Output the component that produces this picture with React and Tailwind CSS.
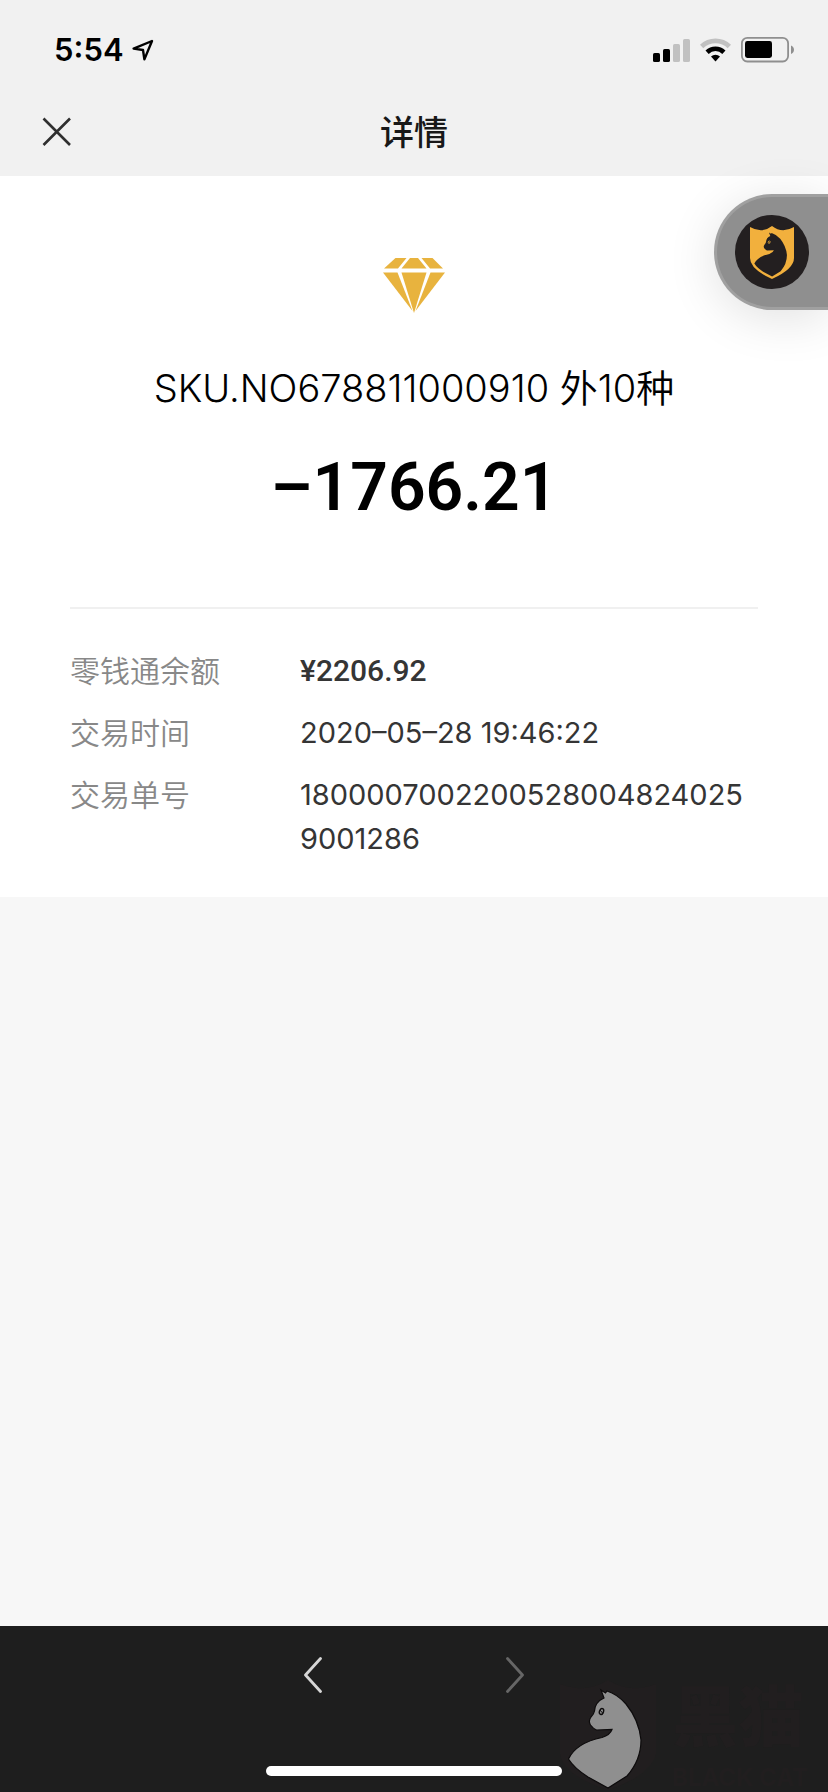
import React from "react";

const details = [
  { label: "零钱通余额", value: "¥2206.92", money: true },
  { label: "交易时间", value: "2020–05–28 19:46:22" },
  { label: "交易单号", value: "18000070022005280048240259001286" },
];

const StatusBar = () => (
  <div className="flex h-[88px] items-center justify-between pl-[54px] pr-[34px] pt-[11px]">
    <div className="flex items-center gap-2">
      <span className="text-[31px] leading-10 font-semibold text-black">5:54</span>
      <svg width="22" height="22" viewBox="0 0 22 22" fill="none" stroke="#000" strokeWidth="2.4" strokeLinejoin="round">
        <path d="M20 2 1.6 9.6 11 11 12.4 20.4Z" />
      </svg>
    </div>
    <div className="flex items-center gap-[10px]">
      <svg width="37" height="24" viewBox="0 0 37 24">
        <rect x="0" y="15" width="7" height="9" rx="1.6" />
        <rect x="10" y="11" width="7" height="13" rx="1.6" />
        <rect x="20" y="6" width="7" height="18" rx="1.6" fill="#c1c1c1" />
        <rect x="30" y="1" width="7" height="23" rx="1.6" fill="#c1c1c1" />
      </svg>
      <svg width="31" height="24" viewBox="0 0 31 24">
        <path d="M0 6.8A22 22 0 0 1 31 6.8L27.7 10.2A17.4 17.4 0 0 0 3.3 10.2Z" fill="#c1c1c1" />
        <path d="M5.5 12.6A14.2 14.2 0 0 1 25.5 12.6L22.3 15.9A9.7 9.7 0 0 0 8.7 15.9Z" />
        <path d="M11 18.6A6.5 6.5 0 0 1 20 18.6L15.5 23.4Z" />
      </svg>
      <svg width="53" height="26" viewBox="0 0 53 26">
        <rect x="0.9" y="0.9" width="46.2" height="23.6" rx="5.4" fill="none" stroke="#8f8f8f" strokeWidth="1.8" />
        <rect x="4" y="4" width="27" height="17" rx="2.4" />
        <path d="M50 8.5C54 10 54 15.5 50 17Z" fill="#8f8f8f" />
      </svg>
    </div>
  </div>
);

const Diamond = () => (
  <svg width="62" height="56" viewBox="0 0 62 56" fill="#e8b33e">
    <path d="M12.5 0H23.5L15 10.5H1Z" />
    <path d="M27 0H35L43.5 10.5H18.5Z" />
    <path d="M38.5 0H49.5L60 10.5H47Z" />
    <path d="M0 14.5H14.5L29.5 53Z" />
    <path d="M18.5 14.5H43.5L31 55Z" />
    <path d="M47.5 14.5H62L32.5 53Z" />
  </svg>
);

const catPath =
  "M41 10L44 18Q35 22 34.5 31Q34 34 31 37Q28 41 30.5 45Q33 48.5 36.5 50L52 49.5Q50 55 42 57.5Q16 63 8.5 79Q14 88 28 97L48 108L67 96Q81 80 81 60Q79 40 66 24Q57 14 47 11L45.5 13Z";

const Eye = ({ fill }) => (
  <>
    <ellipse cx="41.5" cy="31.5" rx="2" ry="3" transform="rotate(20 41.5 31.5)" fill="none" stroke={fill} strokeWidth="1.4" />
    <path d="M40 30L43 33.5" stroke={fill} strokeWidth="1" />
  </>
);

const FloatingBall = () => (
  <button
    aria-label="黑猫"
    className="absolute right-0 top-[194px] flex h-[116px] w-[114px] items-center rounded-l-full border-[3px] border-r-0 border-[#a0a0a0] bg-[#8f8f8f] pl-[18px] shadow-[0_8px_50px_rgba(0,0,0,0.12)]"
  >
    <svg width="74" height="74" viewBox="0 0 74 74">
      <circle cx="37" cy="37" r="37" fill="#231f20" />
      <path d="M15 12Q27 19 37 11Q47 19 59 12V43Q59 54 37 64Q15 54 15 43Z" fill="#f2b03d" />
      <g transform="translate(15.5 13) scale(0.45 0.45)">
        <path d={catPath} fill="#231f20" />
        <Eye fill="#f2b03d" />
      </g>
    </svg>
  </button>
);

const Watermark = () => (
  <div className="absolute bottom-0 right-0 flex items-end">
    <svg width="100" height="112" viewBox="0 0 100 112">
      <path d="M0 4Q26 14 48 0Q70 14 96 4V74Q90 96 48 110Q4 96 0 74Z" fill="#211e1f" />
      <path d={catPath} fill="#8f8f8f" stroke="#0d0b0c" strokeWidth="1.2" />
      <Eye fill="#0d0b0c" />
    </svg>
    <div className="w-[168px] pl-3 text-[#211e1f]">
      <div className="text-[66px] font-black leading-[94px]">黑猫</div>
      <div className="text-[24px] font-bold leading-7">BLACK CAT</div>
    </div>
  </div>
);

const App = () => {
  return (
    <div className="relative flex min-h-screen flex-col overflow-hidden bg-[#f7f7f7] font-['Inter','Noto_Sans_CJK_SC',sans-serif]">
      <header className="bg-[#f1f1f1]">
        <StatusBar />
        <div className="grid h-[88px] grid-cols-[1fr_auto_1fr] items-center px-[42px]">
          <button aria-label="关闭" className="w-[30px]">
            <svg width="30" height="30" viewBox="0 0 30 30" stroke="#2f2f2f" strokeWidth="2.6">
              <path d="M1.5 1.5 28 28M28 1.5 1.5 28" />
            </svg>
          </button>
          <h1 className="text-[34px] font-medium text-[#181818]">详情</h1>
        </div>
      </header>

      {/* 交易內容 */}
      <main className="flex flex-col items-center bg-white px-[70px] pb-9 pt-[82px]">
        <Diamond />
        <p className="mt-11 text-[38px] font-[350] leading-[60px] text-black">SKU.NO678811000910 外10种</p>
        <p className="mt-7 font-['Roboto',sans-serif] text-[66px] font-semibold leading-[84px] text-black">–1766.21</p>
        <dl className="mt-[77px] flex w-full flex-col gap-[18px] border-t-2 border-[#f0f0f0] pt-10 text-[30px] leading-[44px]">
          {details.map((item) => (
            <div key={item.label} className="flex">
              <dt className="w-[230px] shrink-0 font-[350] text-[#888888]">{item.label}</dt>
              <dd
                className={
                  item.money
                    ? "font-['Roboto',sans-serif] font-medium text-[#353535]"
                    : "min-w-0 flex-1 break-all text-[29px] text-[#353535]"
                }
              >
                {item.value}
              </dd>
            </div>
          ))}
        </dl>
      </main>

      <footer className="relative mt-auto flex h-[166px] flex-col items-center justify-between bg-[#1e1e1e] pb-4 pt-[31px]">
        <Watermark />
        <nav className="flex gap-[184px]">
          <button aria-label="后退">
            <svg width="18" height="36" viewBox="0 0 18 36" fill="none" stroke="#d6d6d6" strokeWidth="2.8" strokeLinecap="round" strokeLinejoin="round">
              <path d="M16.5 1.5 1.5 18 16.5 34.5" />
            </svg>
          </button>
          <button aria-label="前进" disabled>
            <svg width="18" height="36" viewBox="0 0 18 36" fill="none" stroke="#666" strokeWidth="2.8" strokeLinecap="round" strokeLinejoin="round">
              <path d="M1.5 1.5 16.5 18 1.5 34.5" />
            </svg>
          </button>
        </nav>
        <div className="h-[10px] w-[296px] rounded-full bg-white" />
      </footer>

      <FloatingBall />
    </div>
  );
};

export default App;
